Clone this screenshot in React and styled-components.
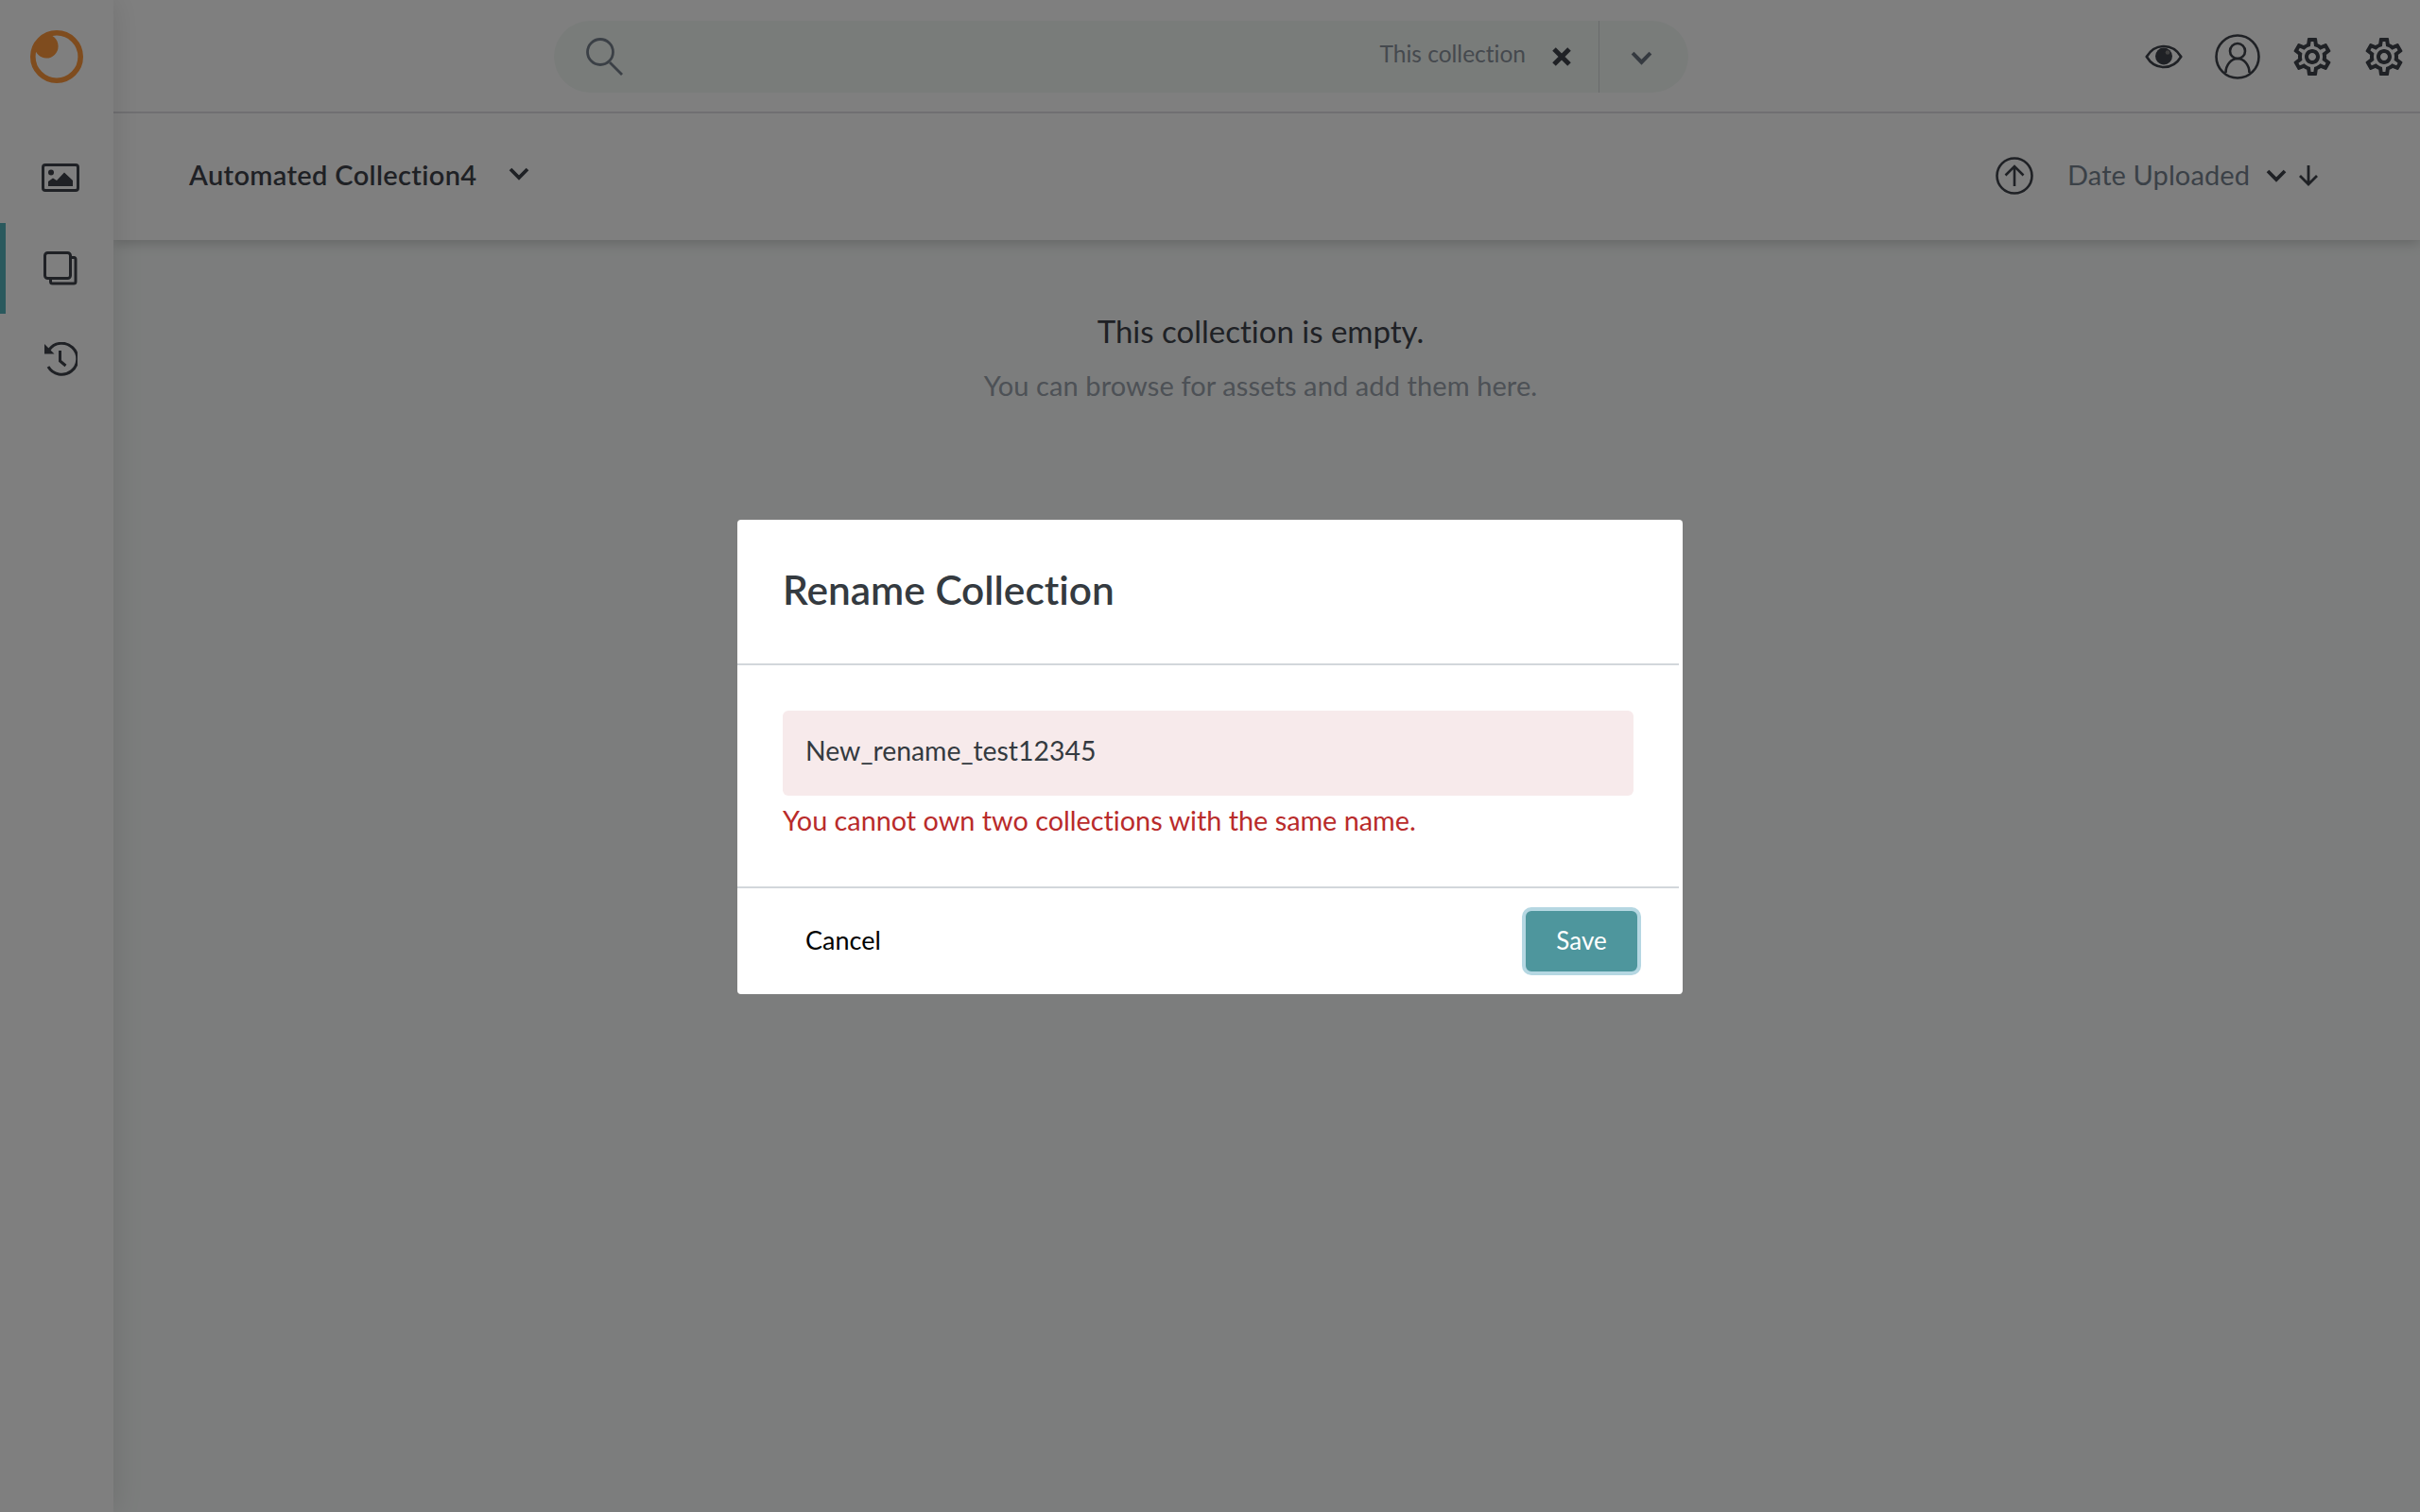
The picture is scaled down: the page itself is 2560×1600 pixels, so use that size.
import React from 'react';
import styled, { createGlobalStyle } from 'styled-components';
import { MdOutlineSettings } from 'react-icons/md';

const GlobalStyle = createGlobalStyle`
  html, body {
    margin: 0;
    padding: 0;
    height: 100%;
    background: #ffffff;
    font-family: Lato, "Open Sans", sans-serif;
    font-variant-ligatures: none;
  }
  * { box-sizing: border-box; }
`;

const Page = styled.div`
  display: flex;
  width: 2560px;
  height: 1600px;
  overflow: hidden;
  background: #f8fbfa;
`;

const Sidebar = styled.nav`
  position: relative;
  z-index: 3;
  flex: 0 0 120px;
  display: flex;
  flex-direction: column;
  background: #ffffff;
  box-shadow: 0 0 30px rgba(0, 0, 0, 0.12);
`;

const LogoSlot = styled.div`
  height: 118px;
  padding: 32px 0 0 32px;
  line-height: 0;
`;

const NavList = styled.div`
  display: flex;
  flex-direction: column;
`;

const NavItem = styled.div`
  height: 96px;
  margin-top: ${(p) => p.$gap || 0}px;
  display: flex;
  align-items: center;
  justify-content: center;
  padding-left: 2px;
  border-left: 6px solid ${(p) => (p.$active ? '#54b2ba' : 'transparent')};
  color: #3e424a;
`;

const Main = styled.div`
  flex: 1;
  display: flex;
  flex-direction: column;
`;

const TopBar = styled.header`
  position: relative;
  z-index: 2;
  height: 120px;
  display: flex;
  align-items: center;
  background: #ffffff;
  border-bottom: 2px solid #e0dfe4;
  padding: 2px 14px 0 466px;
`;

const SearchPill = styled.div`
  width: 1200px;
  height: 76px;
  display: flex;
  align-items: center;
  background: #f3f8f5;
  border-radius: 38px;
  color: #76808c;
`;

const SearchIconSlot = styled.div`
  width: 33px;
  margin-left: 33px;
  line-height: 0;
  flex: 0 0 auto;
`;

const SearchSpacer = styled.div`
  flex: 1;
`;

const ScopeLabel = styled.span`
  font-size: 24.500px;
  color: #8a929c;
  margin: 0 28px 7px 0;
`;

const ClearIcon = styled.div`
  line-height: 0;
  margin-right: 29px;
  color: #3e424a;
`;

const SearchDivider = styled.div`
  width: 1px;
  align-self: stretch;
  background: #d2d6d8;
`;

const SearchCaret = styled.div`
  width: 94px;
  display: flex;
  justify-content: center;
  padding: 2px 6px 0 0;
  line-height: 0;
  color: #6a7480;
`;

const TopActions = styled.div`
  margin-left: auto;
  display: flex;
  align-items: center;
  line-height: 0;
  color: #3e424a;
`;

const ActionIcon = styled.div`
  display: flex;
  line-height: 0;
  margin-left: ${(p) => p.$left}px;
`;

const SubBar = styled.div`
  position: relative;
  z-index: 1;
  height: 134px;
  display: flex;
  align-items: center;
  background: #ffffff;
  box-shadow: 0 2px 14px rgba(0, 0, 0, 0.22);
  padding: 0 108px 6px 80px;
`;

const CollectionName = styled.span`
  font-size: 29px;
  font-weight: 600;
  letter-spacing: 0.35px;
  color: #3e424a;
  white-space: nowrap;
`;

const NameCaret = styled.div`
  margin-left: 33px;
  line-height: 0;
  color: #3e424a;
`;

const SortGroup = styled.div`
  margin-left: auto;
  padding-top: 3px;
  display: flex;
  align-items: center;
  line-height: 0;
  color: #3e424a;
`;

const SortLabel = styled.span`
  font-size: 29px;
  line-height: 1;
  letter-spacing: 0.1px;
  color: #76828f;
  margin: 0 17px 3px 36px;
  white-space: nowrap;
`;

const SortDirection = styled.div`
  margin-left: 13px;
  line-height: 0;
`;

const EmptyState = styled.div`
  flex: 1;
  display: flex;
  flex-direction: column;
  align-items: center;
  padding: 76px 13px 0 0;
`;

const EmptyTitle = styled.div`
  font-size: 33px;
  line-height: 40px;
  color: #3e424a;
`;

const EmptyHint = styled.div`
  font-size: 29px;
  line-height: 36px;
  letter-spacing: 0.1px;
  margin-top: 20px;
  color: #9aa2ac;
`;

const Overlay = styled.div`
  position: fixed;
  inset: 0;
  z-index: 10;
  display: flex;
  align-items: flex-start;
  justify-content: center;
  padding-top: 550px;
  background: rgba(0, 0, 0, 0.5);
`;

const Modal = styled.div`
  width: 1000px;
  height: 502px;
  display: flex;
  flex-direction: column;
  background: #ffffff;
  border-radius: 4px;
`;

const ModalHeader = styled.div`
  height: 154px;
  margin-right: 4px;
  display: flex;
  align-items: center;
  padding: 0 0 5px 48px;
  border-bottom: 2px solid #d2d7db;
`;

const ModalTitle = styled.h2`
  margin: 0;
  font-size: 42.400px;
  font-weight: 600;
  color: #343a40;
`;

const ModalBody = styled.div`
  height: 236px;
  margin-right: 4px;
  padding: 48px 48px 0;
  border-bottom: 2px solid #d2d7db;
`;

const NameInput = styled.div`
  height: 90px;
  display: flex;
  align-items: center;
  padding: 0 24px 6px;
  background: #f7eaeb;
  border-radius: 6px;
  font-size: 28.400px;
  color: #343a40;
`;

const ErrorText = styled.div`
  margin-top: 6px;
  font-size: 28.800px;
  line-height: 40px;
  color: #b92b2b;
`;

const ModalFooter = styled.div`
  flex: 1;
  display: flex;
  align-items: center;
  justify-content: space-between;
  padding: 0 44px 0 72px;
`;

const CancelLabel = styled.span`
  font-size: 27px;
  color: #000000;
  margin-bottom: 4px;
`;

const SaveButton = styled.button`
  width: 126px;
  height: 72px;
  border: 4px solid #b5d7e2;
  border-radius: 10px;
  background: #4e969d;
  color: #ffffff;
  font: 400 26px Lato, sans-serif;
  padding: 0 0 2px;
`;

const Chevron = ({ w = 22, h = 14, sw = 3.8 }) => (
  <svg width={w} height={h} viewBox="0 0 22 14" fill="none" stroke="currentColor" strokeWidth={sw} preserveAspectRatio="none">
    <path d="M2 2l9 9 9-9" />
  </svg>
);

const LogoMark = () => (
  <svg width="56" height="56" viewBox="0 0 56 56">
    <circle cx="28" cy="28" r="25.2" fill="none" stroke="#fe983c" strokeWidth="5.6" />
    <path d="M8.6 12.2A25 25 0 0 1 20 4.6c2.6 1 9.6 3.6 9.6 12.5a12.6 12.6 0 0 1-12.7 12.5C10.500 29.600 5 24 4.600 17.500z" fill="#fe983c" />
  </svg>
);

const ImageIcon = () => (
  <svg width="40" height="30" viewBox="0 0 40 30">
    <rect x="1.500" y="1.500" width="37" height="27" rx="2.500" fill="none" stroke="currentColor" strokeWidth="3" />
    <circle cx="10" cy="9.500" r="3" fill="currentColor" />
    <path d="M7 24v-5l5-3.500 4 2.500 8-8.500 9 8.500V24z" fill="currentColor" />
  </svg>
);

const CopyIcon = () => (
  <svg width="36" height="36" viewBox="0 0 36 36" fill="none" stroke="currentColor" strokeWidth="3">
    <path d="M29 6.500h3.500a2 2 0 0 1 1.500 2V32a2 2 0 0 1-2 2H9.500a2 2 0 0 1-2-2v-3" />
    <rect x="1.500" y="1.500" width="27" height="27" rx="3" />
  </svg>
);

const HistoryIcon = () => (
  <svg width="36" height="36" viewBox="0 0 36 36" fill="none" stroke="currentColor" strokeWidth="3">
    <path d="M6 8.500A16.500 16.500 0 1 1 5 26.500" transform="translate(0 -0.500)" />
    <path d="M1 2l0 10.500 10.500 0z" fill="currentColor" stroke="none" />
    <path d="M17.500 9v11l6 5" />
  </svg>
);

const EyeIcon = () => (
  <svg width="40" height="26" viewBox="0 0 40 26">
    <path d="M1.800 13C6 6 12.500 2 20 2s14 4 18.200 11C34 20 27.500 24 20 24S6 20 1.800 13z" fill="none" stroke="currentColor" strokeWidth="2.600" />
    <circle cx="20" cy="12.500" r="9" fill="currentColor" />
    <circle cx="24" cy="8.500" r="2.300" fill="#808080" />
  </svg>
);

const UserIcon = () => (
  <svg width="48" height="48" viewBox="0 0 48 48" fill="none" stroke="currentColor" strokeWidth="2.600">
    <circle cx="24" cy="24" r="22.500" />
    <circle cx="24" cy="18" r="8" />
    <path d="M11.500 41c0-8 5.500-15 12.500-15s12.500 7 12.500 15" />
  </svg>
);

const SearchIcon = () => (
  <svg width="40" height="40" viewBox="0 0 40 40" fill="none" stroke="currentColor" strokeWidth="2.800">
    <circle cx="16" cy="15" r="13.500" />
    <path d="M26 26l13 13" />
  </svg>
);

const ClearGlyph = () => (
  <svg width="20" height="20" viewBox="0 0 20 20" fill="none" stroke="currentColor" strokeWidth="5">
    <path d="M2 2l16 16M18 2L2 18" />
  </svg>
);

const UploadIcon = () => (
  <svg width="40" height="40" viewBox="0 0 40 40" fill="none" stroke="currentColor" strokeWidth="2.600">
    <circle cx="20" cy="20" r="18.500" />
    <path d="M20 31V10M10.500 19.500L20 10l9.500 9.500" />
  </svg>
);

const ArrowDown = () => (
  <svg width="20" height="22" viewBox="0 0 20 22" fill="none" stroke="currentColor" strokeWidth="2.800">
    <path d="M10 0v20M1 11l9 9 9-9" />
  </svg>
);

export default function App() {
  return (
    <>
      <GlobalStyle />
      <Page>
        <Sidebar>
          <LogoSlot>
            <LogoMark />
          </LogoSlot>
          <NavList>
            <NavItem $gap={22}><ImageIcon /></NavItem>
            <NavItem $active><CopyIcon /></NavItem>
            <NavItem><HistoryIcon /></NavItem>
          </NavList>
        </Sidebar>
        <Main>
          <TopBar>
            <SearchPill>
              <SearchIconSlot><SearchIcon /></SearchIconSlot>
              <SearchSpacer />
              <ScopeLabel>This collection</ScopeLabel>
              <ClearIcon><ClearGlyph /></ClearIcon>
              <SearchDivider />
              <SearchCaret><Chevron w={23} h={15} /></SearchCaret>
            </SearchPill>
            <TopActions>
              <ActionIcon $left={0}><EyeIcon /></ActionIcon>
              <ActionIcon $left={34}><UserIcon /></ActionIcon>
              <ActionIcon $left={31}><MdOutlineSettings size={48} /></ActionIcon>
              <ActionIcon $left={28}><MdOutlineSettings size={48} /></ActionIcon>
            </TopActions>
          </TopBar>
          <SubBar>
            <CollectionName>Automated Collection4</CollectionName>
            <NameCaret><Chevron /></NameCaret>
            <SortGroup>
              <UploadIcon />
              <SortLabel>Date Uploaded</SortLabel>
              <Chevron />
              <SortDirection><ArrowDown /></SortDirection>
            </SortGroup>
          </SubBar>
          <EmptyState>
            <EmptyTitle>This collection is empty.</EmptyTitle>
            <EmptyHint>You can browse for assets and add them here.</EmptyHint>
          </EmptyState>
        </Main>
        <Overlay>
          <Modal>
            <ModalHeader>
              <ModalTitle>Rename Collection</ModalTitle>
            </ModalHeader>
            <ModalBody>
              <NameInput>New_rename_test12345</NameInput>
              <ErrorText>You cannot own two collections with the same name.</ErrorText>
            </ModalBody>
            <ModalFooter>
              <CancelLabel>Cancel</CancelLabel>
              <SaveButton>Save</SaveButton>
            </ModalFooter>
          </Modal>
        </Overlay>
      </Page>
    </>
  );
}
